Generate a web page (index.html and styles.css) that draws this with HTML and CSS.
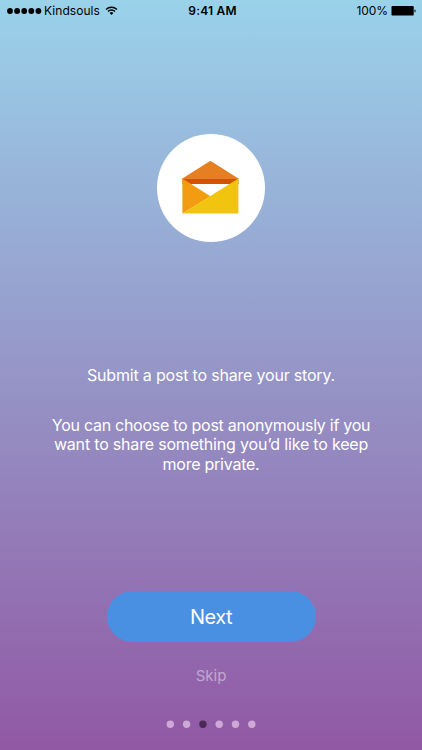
FILE: index.html
```html
<!DOCTYPE html>
<html lang="en">
<head>
<meta charset="UTF-8">
<meta name="viewport" content="width=device-width, initial-scale=1.0">
<title>Kindsouls</title>
<link rel="stylesheet" href="styles.css">
</head>
<body>
    <div class="screen">
        <div class="status-bar">
            <div class="status-left">
                <svg class="signal" width="35" height="7" viewBox="0 0 35 7">
                    <circle cx="3" cy="3" r="2.9"/>
                    <circle cx="10.1" cy="3" r="2.9"/>
                    <circle cx="17.2" cy="3" r="2.9"/>
                    <circle cx="24.3" cy="3" r="2.9"/>
                    <circle cx="31.4" cy="3" r="2.9"/>
                </svg>
                <span class="carrier">Kindsouls</span>
                <svg class="wifi" width="13" height="9" viewBox="0 0 14 10">
                    <path d="M1 3.8a8.5 8.5 0 0 1 12 0M3.1 6a5.5 5.5 0 0 1 7.8 0" fill="none" stroke="#000" stroke-width="1.6"/>
                    <path d="M7 10L4.9 7.7a3 3 0 0 1 4.2 0z"/>
                </svg>
            </div>
            <div class="time">9:41 AM</div>
            <div class="status-right">
                <span class="percent">100%</span>
                <svg width="25" height="10" viewBox="0 0 25 10">
                    <rect x="0.5" y="0" width="22.2" height="9.6" rx="1.2"/>
                    <path d="M23.5 3.2c1.5.4 1.5 3 0 3.4z"/>
                </svg>
            </div>
        </div>

        <div class="icon-circle">
            <svg width="57" height="54" viewBox="-0.4 0.2 57 54">
                <path d="M0 17.5h56v6H0z" fill="#d35400"/>
                <path d="M0 17.8L28 0l28 17.8z" fill="#e67e22"/>
                <path d="M9 23.3h38L28 35.5z" fill="#fff"/>
                <path d="M0 17.8l28 17.7L0 52.7z" fill="#f39c12"/>
                <path d="M56 17.8v34.9H0z" fill="#f1c40f"/>
            </svg>
        </div>

        <div class="message">
            <p class="lead">Submit a post to share your story.</p>
            <p class="detail">
                <span class="line-1">You can choose to post anonymously if you</span><br>
                <span class="line-2">want to share something you’d like to keep</span><br>
                <span class="line-3">more private.</span>
            </p>
        </div>

        <button class="next" type="button">Next</button>
        <a class="skip">Skip</a>

        <svg class="dots" width="90" height="8" viewBox="0 0 90 8">
            <circle cx="4.3" cy="4.2" r="3.7"/>
            <circle cx="20.6" cy="4.2" r="3.7"/>
            <circle class="active" cx="36.9" cy="4.2" r="3.7"/>
            <circle cx="53.2" cy="4.2" r="3.7"/>
            <circle cx="69.5" cy="4.2" r="3.7"/>
            <circle cx="85.8" cy="4.2" r="3.7"/>
        </svg>
    </div>
</body>
</html>
```
FILE: styles.css
```css
* {
    box-sizing: border-box;
}
body {
    margin: 0;
    font-family: Inter, "Liberation Sans", sans-serif;
    color: #fff;
}
.screen {
    display: flex;
    flex-direction: column;
    align-items: center;
    width: 422px;
    height: 750px;
    overflow: hidden;
    background: linear-gradient(#9ad2ea, #9158a4);
}

/* status bar */
.status-bar {
    display: grid;
    grid-template-columns: 1fr auto 1fr;
    align-items: center;
    width: 100%;
    height: 22px;
    padding: 0 6px 0 7px;
    font-size: 12px;
    line-height: 22px;
    color: #000;
}
.status-left,
.status-right {
    display: flex;
    align-items: center;
}
.status-right {
    justify-content: flex-end;
    gap: 3px;
}
.carrier {
    margin: 0 5px 0 2px;
    letter-spacing: 0.05px;
}
.wifi {
    margin-top: -2px;
}
.time {
    padding-left: 2px;
    font-weight: 600;
    letter-spacing: 0.2px;
}
.percent {
    letter-spacing: -0.1px;
}

.icon-circle {
    display: flex;
    width: 108px;
    height: 108px;
    margin-top: 111.5px;
    padding: 27px 0 0 25.3px;
    border-radius: 50%;
    background-color: #fff;
}

/* text */
.message {
    height: 226px;
    margin-top: 123.5px;
    font-size: 16px;
    line-height: 19.5px;
    text-align: center;
    white-space: nowrap;
}
.message p {
    margin: 0;
}
.message .lead {
    padding-top: 1px;
    letter-spacing: -0.19px;
}
.message .detail {
    margin-top: 30px;
}
.line-1 {
    letter-spacing: -0.27px;
}
.line-2 {
    letter-spacing: -0.19px;
}
.line-3 {
    letter-spacing: -0.24px;
}

/* actions */
.next {
    width: 209px;
    height: 51px;
    padding: 1px 0 0;
    border: none;
    border-radius: 26px;
    background-color: #4a90e2;
    color: #fff;
    font: 20px Inter, "Liberation Sans", sans-serif;
    letter-spacing: -0.5px;
}
.skip {
    margin-top: 24px;
    font-size: 15px;
    line-height: 20px;
    color: rgba(255, 255, 255, 0.45);
}
.dots {
    margin-top: 34px;
    fill: #cea9d8;
}
.dots .active {
    fill: #4b2858;
}
```
